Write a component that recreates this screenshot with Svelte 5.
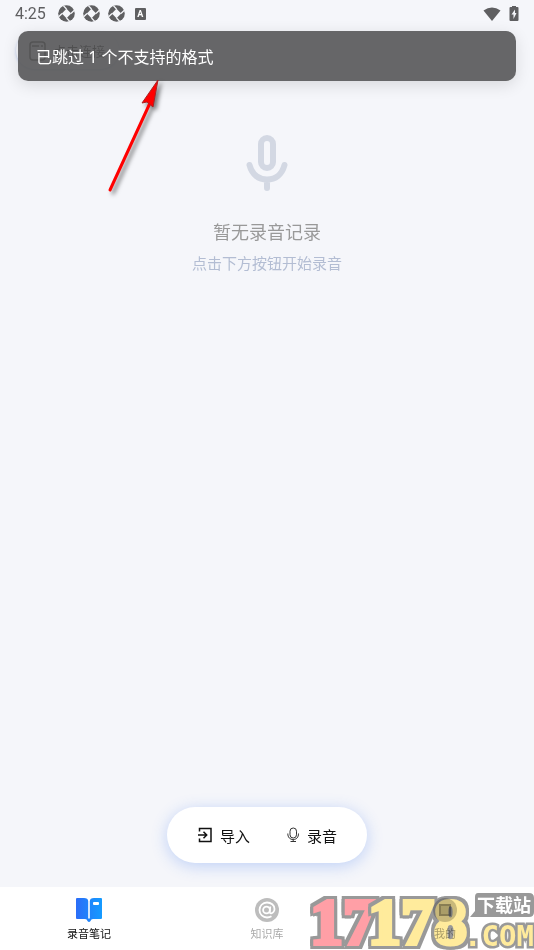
<script lang="ts">
	const notifications = [1, 2, 3];
	const toast = '已跳过 1 个不支持的格式';

	let active = $state('notes');
</script>

<div class="page">
	<div class="statusBar">
		<span class="time">4:25</span>
		{#each notifications as n (n)}
			<svg class="notice" width="17" height="17" viewBox="0 0 16 16">
				<circle cx="8" cy="8" r="7.8" fill="#5f5f61" />
				<path d="M8 3.6 12.4 8 8 12.4 3.6 8z" fill="#f5f6fa" />
				<path
					d="M8 3.8 5 .6M12.2 8l3.2-3M8 12.2l3 3.2M3.8 8 .6 11"
					stroke="#f5f6fa"
					stroke-width="1.2"
				/>
			</svg>
		{/each}
		<span class="badge">A</span>
		<svg class="wifi" width="18" height="14" viewBox="0 0 18 14">
			<path d="M.5 3.4Q9-2.4 17.500 3.400L9 14z" fill="#5f5f61" />
		</svg>
		<svg width="10" height="16" viewBox="0 0 10 16">
			<path d="M3 0h4v1h1.500q1 0 1 1v12q0 1-1 1h-7q-1 0-1-1V2q0-1 1-1H3z" fill="#5f5f61" />
			<path d="M6 3.500 2.500 8.500h2V13l3-6H6z" fill="#f5f6fa" />
		</svg>
	</div>

	<header>
		<button class="device">
			<svg width="17" height="20" viewBox="0 0 17 20" fill="none" stroke="#333">
				<rect x="1" y="1" width="15" height="18" rx="3" stroke-width="1.500" />
				<path d="M3 5h7M12 5h2" stroke-width="1.500" />
			</svg>
			点击连接
		</button>
		<div class="toast" role="status">{toast}</div>
	</header>

	<main>
		<svg width="42" height="58" viewBox="0 0 42 58" fill="none" stroke="#d3d8e3" stroke-linecap="round">
			<rect x="15" y="4" width="12" height="30" rx="6" stroke-width="6" />
			<path d="M3.500 31C6 40.500 12.500 45.500 21 45.500S36 40.500 38.500 31M21 46v8" stroke-width="6" />
		</svg>
		<h1>暂无录音记录</h1>
		<p>点击下方按钮开始录音</p>
	</main>

	<div class="actions">
		<button>
			<svg width="16" height="16" viewBox="0 0 16 16" fill="none" stroke="#111" stroke-width="1.500">
				<path d="M2.500 4.500v-3H14v13H2.500v-3M1 8h8M6.500 4.800 9.700 8l-3.200 3.200" />
			</svg>
			导入
		</button>
		<button>
			<svg width="14" height="16" viewBox="0 0 14 16" fill="none" stroke="#333">
				<rect x="4" y="1" width="6.500" height="10" rx="3.200" />
				<path d="M1.800 6.500C1.800 10.500 4 12.500 7.200 12.500S12.500 10.500 12.500 6.500M7.200 12.500V14.500M4.500 14.500h5.500" />
			</svg>
			录音
		</button>
	</div>

	<nav>
		<button class="tab" class:active={active === 'notes'} onclick={() => (active = 'notes')}>
			<svg width="28" height="26" viewBox="0 0 28 26">
				<defs>
					<linearGradient id="book" x2="1">
						<stop offset="0" stop-color="#2b6df8" />
						<stop offset="1" stop-color="#159bff" />
					</linearGradient>
				</defs>
				<path
					d="M2 1H9Q13 1 13.200 4V21.500H14.800V4Q15 1 19 1H26Q27 1 27 2V21Q27 22 26 22H18Q16 22 15.500 24Q14 26 12.500 24Q12 22 10 22H2Q1 22 1 21V2Q1 1 2 1z"
					fill="url(#book)"
				/>
				<rect x="18" y="5" width="6" height="3" rx="1" fill="#fff" />
			</svg>
			录音笔记
		</button>
		<button class="tab" class:active={active === 'library'} onclick={() => (active = 'library')}>
			<svg width="24" height="26" viewBox="0 0 24 26" fill="none" stroke="#fff" stroke-width="1.800">
				<circle cx="12" cy="13" r="12" fill="#bdbdbd" stroke="none" />
				<circle cx="11.500" cy="13" r="3.400" />
				<path d="M15.300 9.500 14.700 14.500Q14.500 16.500 16.300 16.300C18 16 19.500 14 19.500 12C19.500 8 16 5.500 12 5.500C7.500 5.500 4.500 9 4.500 13C4.500 17.500 8 20.500 12 20.500Q14.500 20.500 16.500 19.300" />
			</svg>
			知识库
		</button>
		<button class="tab" class:active={active === 'mine'} onclick={() => (active = 'mine')}>
			<svg width="24" height="26" viewBox="0 0 24 26">
				<circle cx="12" cy="13" r="12" fill="#c8c8c8" />
				<rect x="7" y="8" width="10" height="10" fill="#aaa" stroke="#888" stroke-width="2" />
			</svg>
			我的
		</button>
	</nav>

	<svg class="arrow" width="64" height="124" viewBox="0 0 64 124">
		<path d="M6 114 46 27" stroke="#f00" stroke-width="3" stroke-linecap="round" />
		<path d="M54 4 38 27 43 26 49 31z" fill="#f00" stroke="#a22" stroke-width="1" />
	</svg>

	<svg class="watermark" width="224" height="62" viewBox="0 0 224 62">
		<text class="digits pink" x="0" y="56">17</text>
		<text class="digits" x="58" y="56">178</text>
		<path d="M168 5H219Q224 5 224 10V24Q224 29 219 29H160L165 23V9Q165 5 168 5z" fill="#999" />
		<text class="site" x="167" y="24">下载站</text>
		<text class="domain" x="154" y="58">.COM</text>
	</svg>
</div>

<style>
	:global(body) {
		margin: 0;
		background: #f5f6fa;
	}
	.page {
		position: relative;
		display: flex;
		flex-direction: column;
		min-height: 100vh;
		overflow: hidden;
		font-family: 'Noto Sans CJK SC', sans-serif;
		background: #f5f6fa;
	}
	button {
		display: flex;
		align-items: center;
		margin: 0;
		padding: 0;
		border: 0;
		background: none;
		font-family: inherit;
		color: #111;
	}
	.statusBar {
		display: flex;
		align-items: center;
		gap: 8px;
		height: 27px;
		padding: 0 15px;
		color: #5f5f61;
	}
	.time {
		margin-right: 4px;
		font: 16px/20px Roboto, sans-serif;
	}
	.badge {
		width: 11px;
		margin-left: 2px;
		border-radius: 1px;
		font: bold 9px/12px Roboto, sans-serif;
		text-align: center;
		color: #fff;
		background: #5f5f61;
	}
	.wifi {
		margin-left: auto;
	}
	header {
		position: relative;
		padding: 5px 16px;
	}
	.device {
		gap: 7px;
		height: 37px;
		padding: 0 14px 0 13px;
		border-radius: 19px;
		font-size: 13px;
		background: #f5f6fa;
		box-shadow: 0 1px 3px rgba(60, 110, 220, 0.3);
	}
	.toast {
		position: absolute;
		top: 4px;
		left: 18px;
		right: 18px;
		padding: 14px 18px 12px;
		border-radius: 10px;
		font-family: 'Noto Sans', 'Noto Sans CJK SC', sans-serif;
		font-size: 16px;
		line-height: 24px;
		color: #fff;
		background: rgba(86, 86, 88, 0.9);
		box-shadow: 0 4px 16px rgba(0, 0, 0, 0.12);
	}
	main {
		display: flex;
		flex: 1;
		flex-direction: column;
		align-items: center;
		padding-top: 60px;
	}
	h1 {
		margin: 25px 0 8px;
		font-size: 18px;
		font-weight: 400;
		line-height: 28px;
		color: #999;
	}
	p {
		margin: 0;
		font-size: 15px;
		line-height: 20px;
		color: #b3bdd3;
	}
	.actions {
		display: flex;
		align-self: center;
		gap: 36px;
		margin-bottom: 24px;
		padding: 0 30px;
		border-radius: 28px;
		background: #fff;
		box-shadow: 0 3px 16px rgba(50, 110, 240, 0.28);
	}
	.actions button {
		gap: 7px;
		height: 56px;
		font-size: 15px;
	}
	nav {
		display: grid;
		grid-template-columns: repeat(3, 1fr);
		background: #fff;
	}
	.tab {
		flex-direction: column;
		gap: 2px;
		height: 63px;
		padding-top: 10px;
		font-size: 11px;
		line-height: 16px;
		color: #aaa;
	}
	.tab.active {
		color: #111;
	}
	.arrow {
		position: absolute;
		top: 76px;
		left: 104px;
		filter: drop-shadow(3px 3px 2px rgba(0, 0, 0, 0.5));
	}
	.watermark {
		position: absolute;
		right: 0;
		bottom: 0;
		mix-blend-mode: multiply;
		pointer-events: none;
	}
	.digits {
		font: bold 66px 'Liberation Serif', serif;
		fill: #ffeb9c;
		stroke: #ffeb9c;
		stroke-width: 4px;
		filter: drop-shadow(3px 0 0 #999) drop-shadow(-3px 0 0 #999) drop-shadow(0 3px 0 #999)
			drop-shadow(0 -3px 0 #999);
	}
	.digits.pink {
		fill: #ff9fa6;
		stroke: #ff9fa6;
	}
	.site {
		font-size: 18px;
		font-weight: 700;
		fill: #fff;
	}
	.domain {
		font: bold 29px 'DejaVu Sans Mono', monospace;
		fill: #ffeb9c;
		stroke: #999;
		stroke-width: 5px;
		paint-order: stroke;
	}
</style>
